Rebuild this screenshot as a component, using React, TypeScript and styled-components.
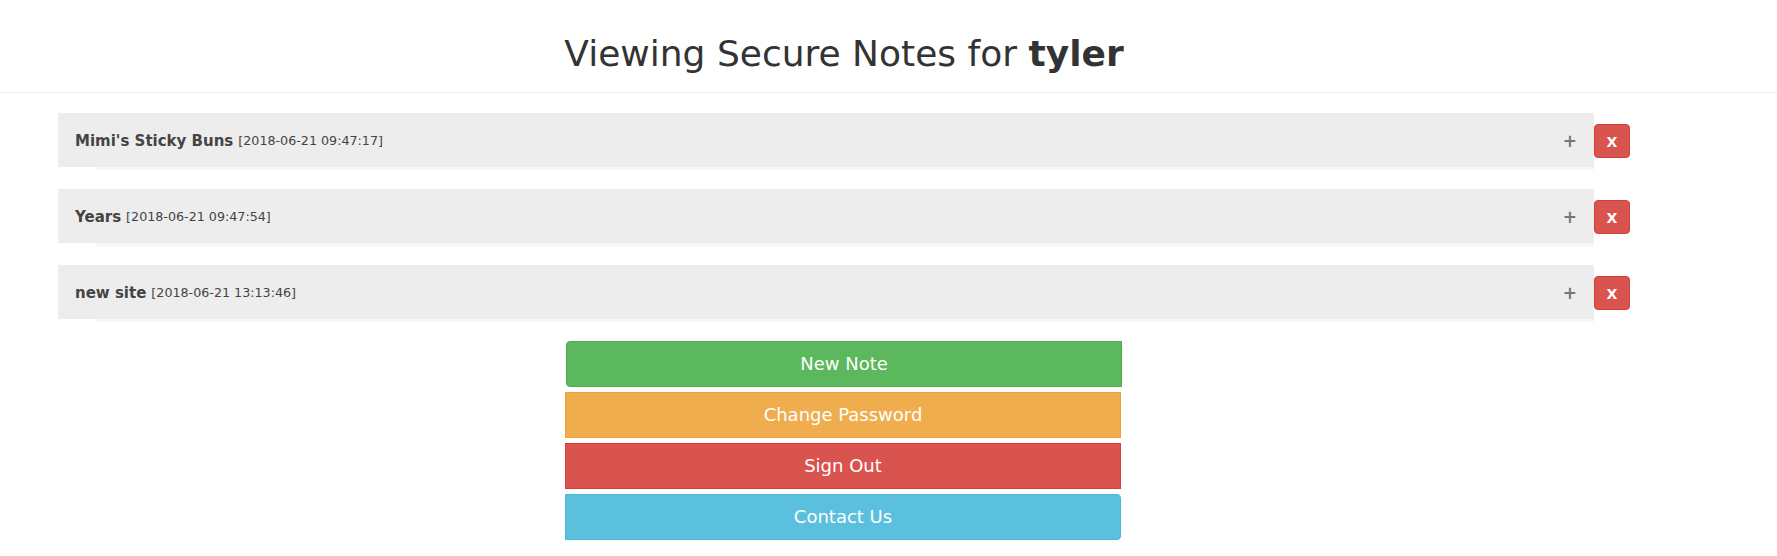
import React from "react";
import styled, { createGlobalStyle } from "styled-components";

const GlobalStyle = createGlobalStyle`
  body {
    margin: 0;
    background: #fff;
    font-family: "DejaVu Sans", Verdana, sans-serif;
    color: #333;
  }
`;

const Header = styled.div`
  height: 93px;
  border-bottom: 1px solid #eee;
  display: flex;
  align-items: center;
  justify-content: center;
  padding-right: 89px;
  padding-top: 14px;
  box-sizing: border-box;
`;

const Title = styled.h1`
  margin: 0;
  font-size: 36px;
  font-weight: 400;
  color: #333;

  strong {
    font-weight: 700;
  }
`;

const NoteList = styled.div`
  padding: 20px 0 0 58px;
  display: flex;
  flex-direction: column;
  gap: 19px;
`;

const NoteRow = styled.div`
  display: flex;
  align-items: flex-start;
`;

const Panel = styled.div`
  width: 1536px;
`;

const PanelHeading = styled.div`
  height: 54px;
  background: #ededed;
  display: flex;
  align-items: center;
  padding: 1px 17px 0;
  box-sizing: border-box;
  color: #444;
`;

const NoteTitle = styled.span`
  font-size: 15px;
  font-weight: 700;
`;

const NoteDate = styled.span`
  font-size: 12.7px;
  margin-left: 5px;
`;

const Expand = styled.span`
  margin-left: auto;
  font-size: 17px;
  font-weight: 700;
  color: #777;
`;

const PanelStrip = styled.div`
  height: 3px;
  margin-left: 37px;
  background: #f6f6f6;
`;

const DeleteButton = styled.button`
  width: 36px;
  height: 34px;
  margin-top: 11px;
  border: 1px solid #d43f3a;
  border-radius: 4px;
  background: #d9534f;
  color: #fff;
  font-family: "DejaVu Sans", Verdana, sans-serif;
  font-weight: 700;
  font-size: 14px;
  padding: 2px 0 0;
`;

const Actions = styled.div`
  margin: 19px 0 0 565px;
  width: 556px;
  display: flex;
  flex-direction: column;
  gap: 5px;
`;

const ActionButton = styled.button<{ $bg: string; $border: string; $radius: string; $nudge?: boolean }>`
  height: 46px;
  width: 100%;
  margin-left: ${(p) => (p.$nudge ? "1px" : "0")};
  background: ${(p) => p.$bg};
  border: 1px solid ${(p) => p.$border};
  border-radius: ${(p) => p.$radius};
  color: #fff;
  font-family: "DejaVu Sans", Verdana, sans-serif;
  font-size: 18px;
  padding: 0 0 2px;
`;

const notes = [
  { title: "Mimi's Sticky Buns", date: "2018-06-21 09:47:17" },
  { title: "Years", date: "2018-06-21 09:47:54" },
  { title: "new site", date: "2018-06-21 13:13:46" },
];

const App = () => {
  return (
    <>
      <GlobalStyle />
      <Header>
        <Title>
          Viewing Secure Notes for <strong>tyler</strong>
        </Title>
      </Header>

      <NoteList>
        {notes.map((note) => (
          <NoteRow key={note.title}>
            <Panel>
              <PanelHeading>
                <NoteTitle>{note.title}</NoteTitle>
                <NoteDate>[{note.date}]</NoteDate>
                <Expand>+</Expand>
              </PanelHeading>
              <PanelStrip />
            </Panel>
            <DeleteButton>X</DeleteButton>
          </NoteRow>
        ))}
      </NoteList>

      <Actions>
        <ActionButton $bg="#5cb85c" $border="#4cae4c" $radius="4px 0 0 4px" $nudge>
          New Note
        </ActionButton>
        <ActionButton $bg="#f0ad4e" $border="#eea236" $radius="0">
          Change Password
        </ActionButton>
        <ActionButton $bg="#d9534f" $border="#d43f3a" $radius="0">
          Sign Out
        </ActionButton>
        <ActionButton $bg="#5bc0de" $border="#46b8da" $radius="0 4px 4px 0">
          Contact Us
        </ActionButton>
      </Actions>
    </>
  );
};

export default App;
